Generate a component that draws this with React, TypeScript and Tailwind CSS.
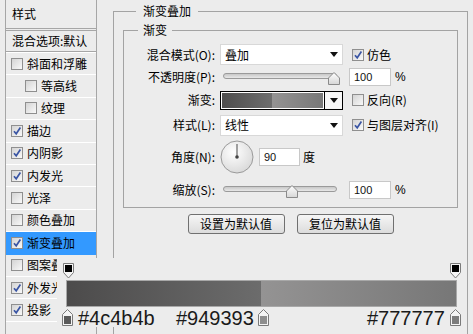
import React from "react";

const layers = [
  { name: "斜面和浮雕", checked: false, indent: false },
  { name: "等高线", checked: false, indent: true },
  { name: "纹理", checked: false, indent: true },
  { name: "描边", checked: true, indent: false },
  { name: "内阴影", checked: true, indent: false },
  { name: "内发光", checked: true, indent: false },
  { name: "光泽", checked: false, indent: false },
  { name: "颜色叠加", checked: false, indent: false },
  { name: "渐变叠加", checked: true, indent: false, active: true },
  { name: "图案叠加", checked: false, indent: false },
  { name: "外发光", checked: true, indent: false },
  { name: "投影", checked: true, indent: false },
];

function Check({ checked }: { checked?: boolean }) {
  return (
    <span className="relative flex h-[12px] w-[12px] shrink-0 items-center justify-center border border-[#8f8f8f] bg-gradient-to-br from-[#d4d4d4] to-[#f9f9f9]">
      {checked && (
        <svg width="10" height="10" viewBox="0 0 10 10" className="absolute">
          <path d="M2 5.2 L4.2 7.8 L8.4 1.6" fill="none" stroke="#3a55a4" strokeWidth="1.7" />
        </svg>
      )}
    </span>
  );
}

function Arrow() {
  return (
    <svg width="8" height="5" viewBox="0 0 8 5">
      <path d="M0 0H8L4 5Z" fill="#111" />
    </svg>
  );
}

function Select({ value }: { value: string }) {
  return (
    <div className="flex h-[21px] w-[123px] items-center justify-between border border-[#d8d8d8] bg-white pl-[4px] pr-[4px]">
      <span>{value}</span>
      <Arrow />
    </div>
  );
}

function Slider({ at }: { at: number }) {
  return (
    <div className="relative h-[18px] w-[123px]">
      <div className="absolute left-[3px] right-[6px] top-[5px] h-[6px] rounded-full border border-[#9a9a9a] bg-gradient-to-b from-[#c8c8c8] to-[#e8e8e8]" />
      <svg
        width="12"
        height="13"
        viewBox="0 0 12 13"
        className="absolute top-[4px]"
        style={{ left: at }}
      >
        <defs>
          <linearGradient id="thumb" x1="0" y1="0" x2="0" y2="1">
            <stop offset="0" stopColor="#ffffff" />
            <stop offset="1" stopColor="#d6d6d6" />
          </linearGradient>
        </defs>
        <path d="M6 0.5 L11.5 6 V12.5 H0.5 V6 Z" fill="url(#thumb)" stroke="#8a8a8a" />
      </svg>
    </div>
  );
}

function NumBox({ value, w }: { value: string; w: string }) {
  return (
    <div
      className={`flex h-[18px] ${w} items-center border border-[#c8c8c8] bg-white pl-[4px] font-['Liberation_Sans',sans-serif] text-[11px] text-[#111]`}
    >
      {value}
    </div>
  );
}

function TopStop({ left }: { left: string }) {
  return (
    <svg width="11" height="16" viewBox="0 0 11 16" className={`absolute top-[5px] ${left}`}>
      <path d="M0.5 0.5 H10.5 V9.5 L5.5 15 L0.5 9.5 Z" fill="#f4f4f4" stroke="#7a7a7a" />
      <rect x="2" y="2" width="7" height="7" fill="#000" />
    </svg>
  );
}

function BottomStop({ left, color }: { left: string; color: string }) {
  return (
    <svg width="11" height="17" viewBox="0 0 11 17" className={`absolute top-[51px] ${left}`}>
      <path d="M5.5 0.5 L10.5 5.5 V16.5 H0.5 V5.5 Z" fill="#f4f4f4" stroke="#7a7a7a" />
      <rect x="2" y="7" width="7" height="8" fill={color} />
    </svg>
  );
}

export default function App() {
  return (
    <div className="relative flex h-[334px] w-[473px] overflow-hidden bg-[#ececec] font-['Noto_Sans_CJK_SC',sans-serif] text-[12px] leading-[16px] text-black">
      {/* style list */}
      <div className="ml-[5px] flex w-[92px] shrink-0 flex-col border-x border-[#a6a6a6]">
        <div className="flex h-[29px] items-center border-b border-[#a6a6a6] pl-[6px]">样式</div>
        <div className="mt-[1px] flex h-[22px] items-center overflow-hidden whitespace-nowrap border-y border-[#a6a6a6] pl-[6px]">
          混合选项:默认
        </div>
        <div className="h-[1px] bg-white" />
        {layers.map((l) => (
          <div
            key={l.name}
            className={`flex h-[22.4px] items-center gap-[4px] whitespace-nowrap border-b ${
              l.active ? "border-[#3399ff] bg-[#3399ff]" : "border-white"
            } ${l.indent ? "pl-[19px]" : "pl-[5px]"}`}
          >
            <Check checked={l.checked} />
            <span>{l.name}</span>
          </div>
        ))}
      </div>

      {/* gradient overlay settings */}
      <div className="ml-[16px] mt-[3px]">
        <fieldset className="h-[400px] w-[355px] border border-[#a3a3a3] px-[9px]">
          <legend className="ml-[13px] px-[7px] leading-[16px]">渐变叠加</legend>
          <fieldset className="mt-[3px] h-[186px] border border-[#a3a3a3]">
            <legend className="ml-[14px] px-[5px] leading-[16px]">渐变</legend>

            <div className="mt-[6px] flex h-[21px] items-center">
              <span className="w-[92px] pr-[1px] text-right">混合模式(O):</span>
              <span className="ml-[4px]">
                <Select value="叠加" />
              </span>
              <span className="ml-[9px] flex items-center gap-[3px]">
                <Check checked />
                仿色
              </span>
            </div>

            <div className="flex h-[23px] items-center">
              <span className="w-[92px] pr-[1px] text-right">不透明度(P):</span>
              <span className="ml-[4px]">
                <Slider at={108} />
              </span>
              <span className="ml-[6px]">
                <NumBox value="100" w="w-[42px]" />
              </span>
              <span className="ml-[4px] font-['Liberation_Sans',sans-serif] text-[12px]">%</span>
            </div>

            <div className="flex h-[24px] items-center">
              <span className="w-[92px] pr-[1px] text-right">渐变:</span>
              <div className="ml-[4px] flex h-[19px] w-[123px] border border-black bg-white">
                <div className="m-[1px] flex-1 bg-[linear-gradient(to_right,#4e4d4d_0%,#6e6e6e_50%,#949393_50%,#787878_100%)]" />
                <div className="flex w-[18px] items-center justify-center border-l border-black bg-[#f7f7f7]">
                  <Arrow />
                </div>
              </div>
              <span className="ml-[9px] flex items-center gap-[3px]">
                <Check />
                反向(R)
              </span>
            </div>

            <div className="flex h-[26px] items-center">
              <span className="w-[92px] pr-[1px] text-right">样式(L):</span>
              <span className="ml-[4px]">
                <Select value="线性" />
              </span>
              <span className="ml-[9px] flex items-center gap-[3px]">
                <Check checked />
                与图层对齐(I)
              </span>
            </div>

            <div className="flex h-[38px] items-center">
              <span className="w-[92px] pr-[1px] text-right">角度(N):</span>
              <svg width="34" height="34" viewBox="0 0 34 34" className="ml-[4px]">
                <defs>
                  <radialGradient id="dial" cx="40%" cy="35%" r="70%">
                    <stop offset="0" stopColor="#ffffff" />
                    <stop offset="1" stopColor="#d8d8d8" />
                  </radialGradient>
                </defs>
                <circle cx="17" cy="17" r="16" fill="url(#dial)" stroke="#9a9a9a" />
                <line x1="17" y1="17" x2="17" y2="4" stroke="#666" strokeWidth="1.2" />
                <circle cx="17" cy="17" r="1.8" fill="#444" />
              </svg>
              <span className="ml-[5px]">
                <NumBox value="90" w="w-[41px]" />
              </span>
              <span className="ml-[3px]">度</span>
            </div>

            <div className="flex h-[28px] items-center">
              <span className="w-[92px] pr-[1px] text-right">缩放(S):</span>
              <span className="ml-[4px]">
                <Slider at={66} />
              </span>
              <span className="ml-[6px]">
                <NumBox value="100" w="w-[42px]" />
              </span>
              <span className="ml-[4px] font-['Liberation_Sans',sans-serif] text-[12px]">%</span>
            </div>
          </fieldset>

          <div className="mt-[6px] flex justify-center gap-[12px]">
            <button className="h-[20px] w-[97px] rounded-[3px] border border-[#707070] bg-gradient-to-b from-[#f6f6f6] to-[#dcdcdc] leading-[16px]">
              设置为默认值
            </button>
            <button className="h-[20px] w-[97px] rounded-[3px] border border-[#707070] bg-gradient-to-b from-[#f6f6f6] to-[#dcdcdc] leading-[16px]">
              复位为默认值
            </button>
          </div>
        </fieldset>
      </div>

      {/* gradient editor strip laid over the dialog */}
      <div className="absolute left-[57px] top-[258px] h-[69px] w-[405px] bg-[#ececec]">
        <TopStop left="left-[6px]" />
        <TopStop left="left-[393px]" />
        <div className="absolute left-[9px] top-[22px] h-[27px] w-[391px] border border-[#a8a8a8] bg-[linear-gradient(to_right,#4c4b4b_0%,#6c6c6c_50%,#949393_50%,#777777_100%)]" />
        <BottomStop left="left-[5px]" color="#5a5a5a" />
        <BottomStop left="left-[201px]" color="#8e8e8e" />
        <BottomStop left="left-[393px]" color="#7c7c7c" />
        <span className="absolute left-[21px] top-[50px] font-['Liberation_Sans',sans-serif] text-[20px] leading-[20px] text-[#1a1a1a]">
          #4c4b4b
        </span>
        <span className="absolute left-[119px] top-[50px] font-['Liberation_Sans',sans-serif] text-[20px] leading-[20px] text-[#1a1a1a]">
          #949393
        </span>
        <span className="absolute left-[310px] top-[50px] font-['Liberation_Sans',sans-serif] text-[20px] leading-[20px] text-[#1a1a1a]">
          #777777
        </span>
      </div>
    </div>
  );
}
